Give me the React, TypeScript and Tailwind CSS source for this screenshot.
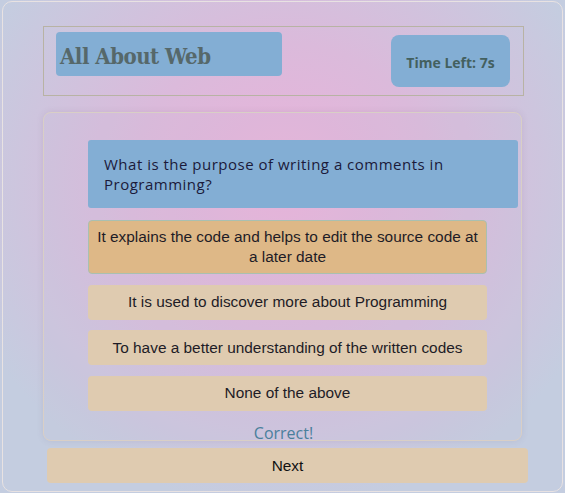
import React from "react";

const options = [
  "It explains the code and helps to edit the source code at a later date",
  "It is used to discover more about Programming",
  "To have a better understanding of the written codes",
  "None of the above",
];

export default function App() {
  return (
    <div className="w-[565px] h-[493px] pt-[1px] px-[2px] pb-[1px] bg-[radial-gradient(ellipse_60%_65%_at_50%_38%,#eab2da_0%,#dbbadb_45%,#c4cde0_100%)]">
      <div className="h-full rounded-[10px] border border-[#e8e2e2] pt-[24px] pl-[40px] flex flex-col">
        {/* Header */}
        <div className="shrink-0 w-[481px] h-[70px] border border-[#b8b3a4] flex justify-between items-start pt-[5px] pl-[12px] pr-[13px]">
          <div className="w-[226px] h-[44px] bg-[#83aed4] rounded-[4px] pl-[4px] pt-[9px]">
            <span className="font-['DejaVu_Serif',serif] font-bold font-stretch-condensed text-[22px] leading-[30px] tracking-[-0.5px] text-[#56686a]">
              All About Web
            </span>
          </div>
          <div className="mt-[3px] w-[119px] h-[52px] bg-[#83aed4] rounded-[8px] flex items-center justify-center pt-[3px]">
            <span className="font-['Open_Sans',sans-serif] font-bold text-[14px] text-[#43605f]">
              Time Left: 7s
            </span>
          </div>
        </div>

        {/* Quiz card */}
        <div className="shrink-0 mt-[16px] w-[479px] h-[329px] rounded-[8px] border border-[#d9cfc6] shadow-[0_0_6px_rgba(120,100,130,0.15)] bg-[rgba(200,190,210,0.12)] pt-[27px] pl-[44px] pr-[2px] flex flex-col">
          <div className="shrink-0 w-[430px] h-[68px] bg-[#83aed4] rounded-[3px] pl-[16px] pt-[14px] pr-[10px]">
            <p className="font-['Open_Sans',sans-serif] text-[15px] leading-[20px] tracking-[0.5px] text-[#1b1a3a]">
              What is the purpose of writing a comments in Programming?
            </p>
          </div>
          <div className="shrink-0 mt-[12px] w-[399px] flex flex-col gap-[10.5px]">
            <div className="shrink-0 h-[54px] bg-[#deb887] border border-[#a9c0b0] rounded-[4px] flex items-center justify-center text-center px-[7px]">
              <span className="font-['Liberation_Sans',Arial,sans-serif] text-[15.4px] leading-[20px] text-[#1e1c26]">
                {options[0]}
              </span>
            </div>
            {options.slice(1).map((o) => (
              <div
                key={o}
                className="shrink-0 h-[35px] bg-[#dfcbb0] rounded-[4px] flex items-center justify-center text-center"
              >
                <span className="font-['Liberation_Sans',Arial,sans-serif] text-[15.4px] leading-[20px] text-[#1e1c26]">
                  {o}
                </span>
              </div>
            ))}
          </div>
          <div className="shrink-0 mt-[10px] w-[399px] text-center relative left-[-4px]">
            <span className="font-['Open_Sans',sans-serif] text-[16px] leading-[20px] text-[#4a7f9c]">
              Correct!
            </span>
          </div>
        </div>

        {/* Next */}
        <div className="shrink-0 mt-[7px] ml-[4px] w-[481px] h-[35px] bg-[#dfcbb0] rounded-[4px] flex items-center justify-center">
          <span className="font-['Liberation_Sans',Arial,sans-serif] text-[15.4px] text-[#111]">
            Next
          </span>
        </div>
      </div>
    </div>
  );
}
